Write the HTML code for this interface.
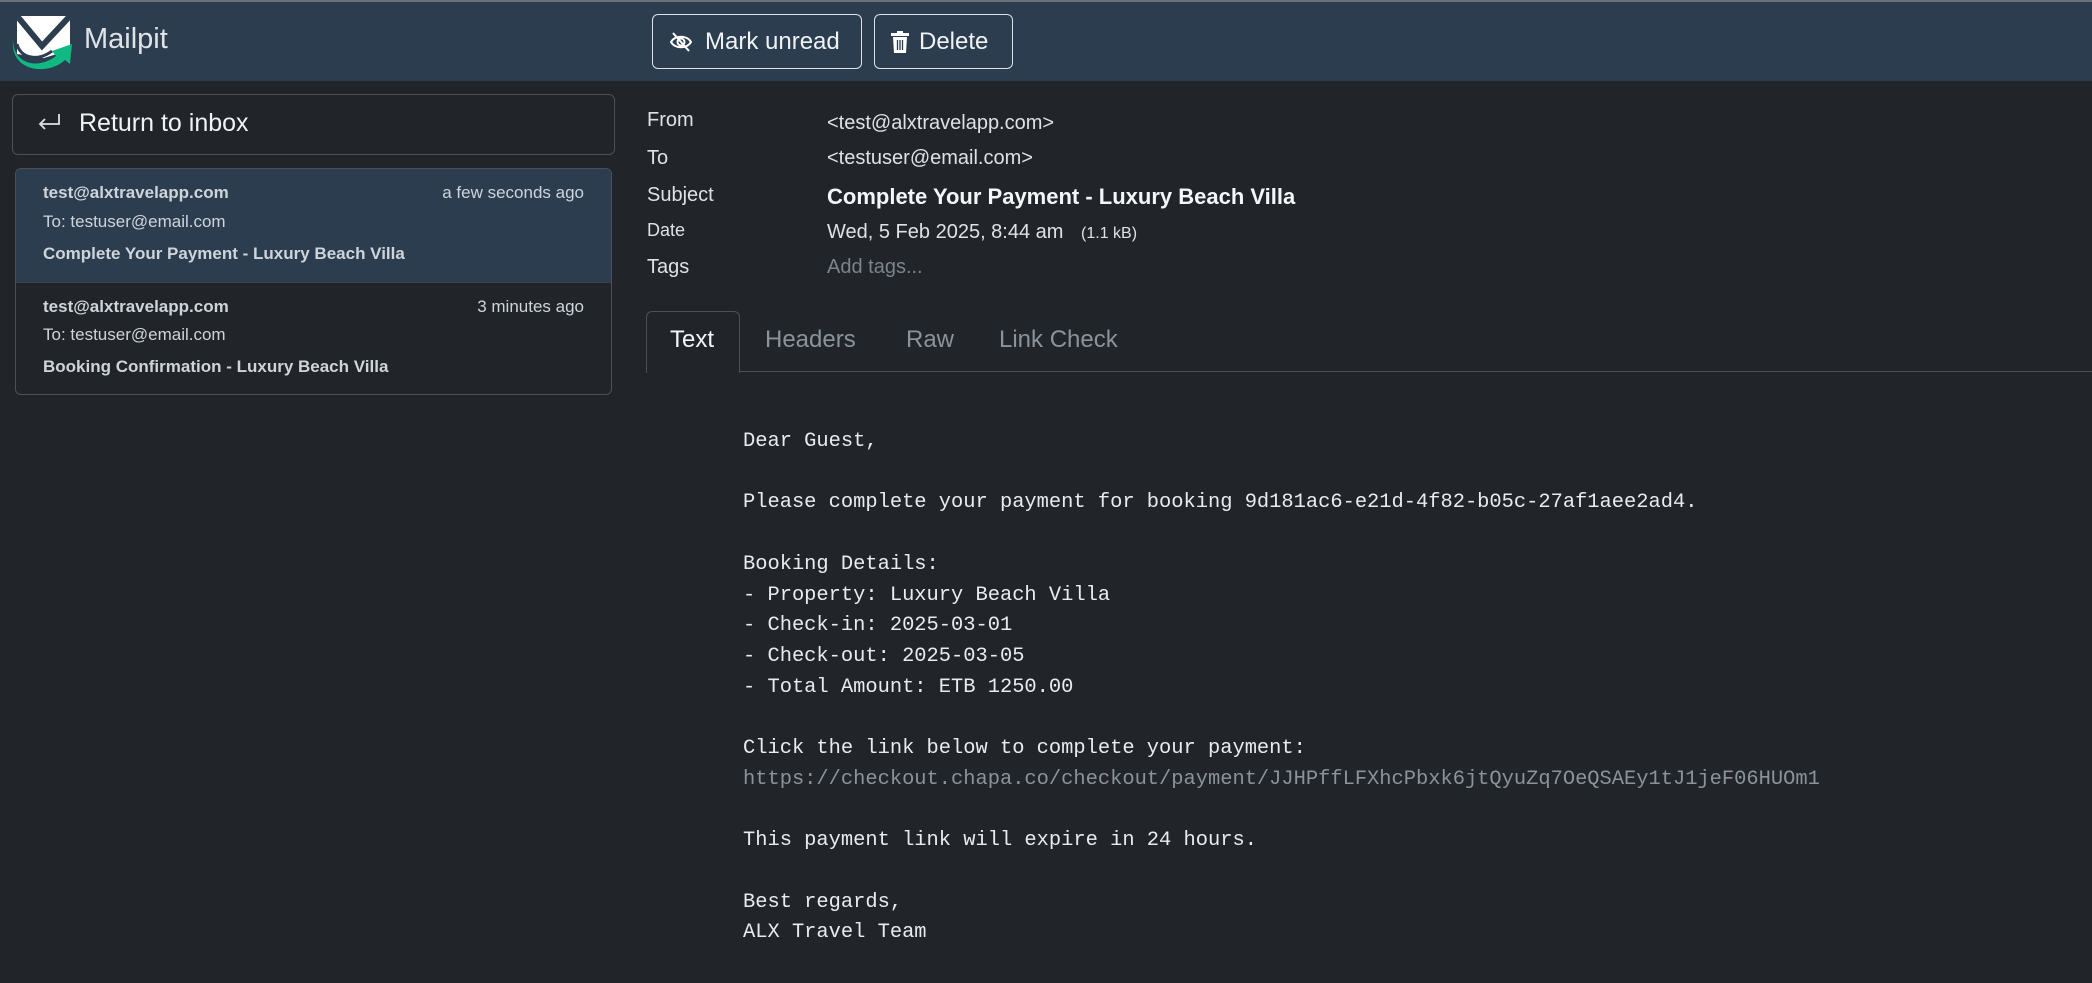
<!DOCTYPE html>
<html><head><meta charset="utf-8"><style>
*{box-sizing:border-box;margin:0;padding:0}
body{width:2092px;height:983px;overflow:hidden;background:#212529;color:#dee2e6;font-family:"Liberation Sans",sans-serif;position:relative}
.hdr{position:absolute;left:0;top:0;width:2092px;height:81px;background:#2c3d50;border-top:2px solid #6c7177}
.abs{position:absolute;white-space:nowrap}
.btn{position:absolute;top:14px;height:55px;border:1.5px solid #dee2e6;border-radius:6px;font-size:24px;color:#f0f2f4;display:flex;align-items:center;padding-left:16px}
.lbl{position:absolute;left:647px;font-size:20px;color:#dee2e6}
.val{position:absolute;left:827px;font-size:20px;color:#dee2e6}
.mono{position:absolute;left:743px;top:427px;font-family:"Liberation Mono",monospace;font-size:20.4px;line-height:30.7px;white-space:pre;color:#e9ecef}
.it{position:absolute;left:43px;font-size:17px;color:#ced4da}
</style></head><body>
<div class="hdr">
<svg class="abs" style="left:12px;top:12px" width="62" height="58" viewBox="0 0 62 58">
<path d="M5 2H58V36L32 44L5 40Z" fill="#fff"/>
<path d="M5 2L30 32L58 2" fill="none" stroke="#2c3d50" stroke-width="6"/>
<path d="M1 26C1 50 26 56 44 42L40 37L60 30L58 50L53 46C36 62 -2 58 1 26Z" fill="#10b981"/>
<path d="M5 30C8 44 26 48 40 37" fill="none" stroke="#2c3d50" stroke-width="3"/>
</svg>
<div class="abs" style="left:84px;top:21px;font-size:29px;color:#dfe3e7">Mailpit</div>
</div>
<div class="btn" style="left:652px;width:210px">
<svg width="24" height="22" viewBox="0 0 24 22" fill="none" stroke="#fff" stroke-width="2"><path d="M2 11C6 4 18 4 22 11C18 18 6 18 2 11Z"/><circle cx="12" cy="11" r="3.5"/><path d="M4 2L20 20"/></svg>
<span style="margin-left:12px">Mark unread</span></div>
<div class="btn" style="left:874px;width:139px">
<svg width="18" height="22" viewBox="0 0 18 22" fill="#fff"><rect x="0" y="2" width="18" height="3"/><rect x="6" y="0" width="6" height="3"/><path d="M2 6H16L15 22H3Z"/><path d="M6.5 9V19M9 9V19M11.5 9V19" stroke="#2c3d50" stroke-width="1.3"/></svg>
<span style="margin-left:10px">Delete</span></div>

<div class="abs" style="left:12px;top:94px;width:603px;height:61px;border:1.5px solid #495057;border-radius:6px"></div>
<svg class="abs" style="left:37px;top:112px" width="24" height="22" viewBox="0 0 24 22" fill="none" stroke="#dee2e6" stroke-width="1.8"><path d="M22 2V12H3M8 7L3 12L8 17"/></svg>
<div class="abs" style="left:79px;top:109px;font-size:25px;color:#f0f2f4">Return to inbox</div>

<div class="abs" style="left:15px;top:168px;width:597px;height:227px;border:1.5px solid #495057;border-radius:6px;overflow:hidden">
<div style="height:114px;background:#2c3d50;border-bottom:1px solid #3a4149"></div>
</div>
<div class="it" style="top:183px;font-weight:bold">test@alxtravelapp.com</div>
<div class="it" style="top:183px;left:434px;width:150px;text-align:right">a few seconds ago</div>
<div class="it" style="top:212px">To: testuser@email.com</div>
<div class="it" style="top:244px;font-weight:bold">Complete Your Payment - Luxury Beach Villa</div>
<div class="it" style="top:297px;font-weight:bold">test@alxtravelapp.com</div>
<div class="it" style="top:297px;left:434px;width:150px;text-align:right">3 minutes ago</div>
<div class="it" style="top:325px">To: testuser@email.com</div>
<div class="it" style="top:357px;font-weight:bold">Booking Confirmation - Luxury Beach Villa</div>

<div class="lbl" style="top:109px">From</div>
<div class="lbl" style="top:147px">To</div>
<div class="lbl" style="top:184px">Subject</div>
<div class="lbl" style="top:220px;font-size:18px">Date</div>
<div class="lbl" style="top:256px">Tags</div>
<div class="val" style="top:112px">&lt;test@alxtravelapp.com&gt;</div>
<div class="val" style="top:147px">&lt;testuser@email.com&gt;</div>
<div class="val" style="top:184px;font-weight:bold;font-size:22px;color:#f4f6f8">Complete Your Payment - Luxury Beach Villa</div>
<div class="val" style="top:221px">Wed, 5 Feb 2025, 8:44 am <span style="font-size:16px;margin-left:12px">(1.1 kB)</span></div>
<div class="val" style="top:256px;color:#7b838b">Add tags...</div>

<div class="abs" style="left:646px;top:371px;width:1446px;border-top:1.5px solid #495057"></div>
<div class="abs" style="left:646px;top:311px;width:94px;height:62px;border:1.5px solid #495057;border-bottom:none;border-radius:6px 6px 0 0;background:#212529"></div>
<div class="abs" style="left:670px;top:326px;font-size:24px;color:#f4f6f8">Text</div>
<div class="abs" style="left:765px;top:326px;font-size:24px;color:#8a939b">Headers</div>
<div class="abs" style="left:906px;top:326px;font-size:24px;color:#8a939b">Raw</div>
<div class="abs" style="left:999px;top:326px;font-size:24px;color:#8a939b">Link Check</div>

<div class="mono">Dear Guest,

Please complete your payment for booking 9d181ac6-e21d-4f82-b05c-27af1aee2ad4.

Booking Details:
- Property: Luxury Beach Villa
- Check-in: 2025-03-01
- Check-out: 2025-03-05
- Total Amount: ETB 1250.00

Click the link below to complete your payment:
<span style="color:#8a939b">https://checkout.chapa.co/checkout/payment/JJHPffLFXhcPbxk6jtQyuZq7OeQSAEy1tJ1jeF06HUOm1</span>

This payment link will expire in 24 hours.

Best regards,
ALX Travel Team</div>
</body></html>
